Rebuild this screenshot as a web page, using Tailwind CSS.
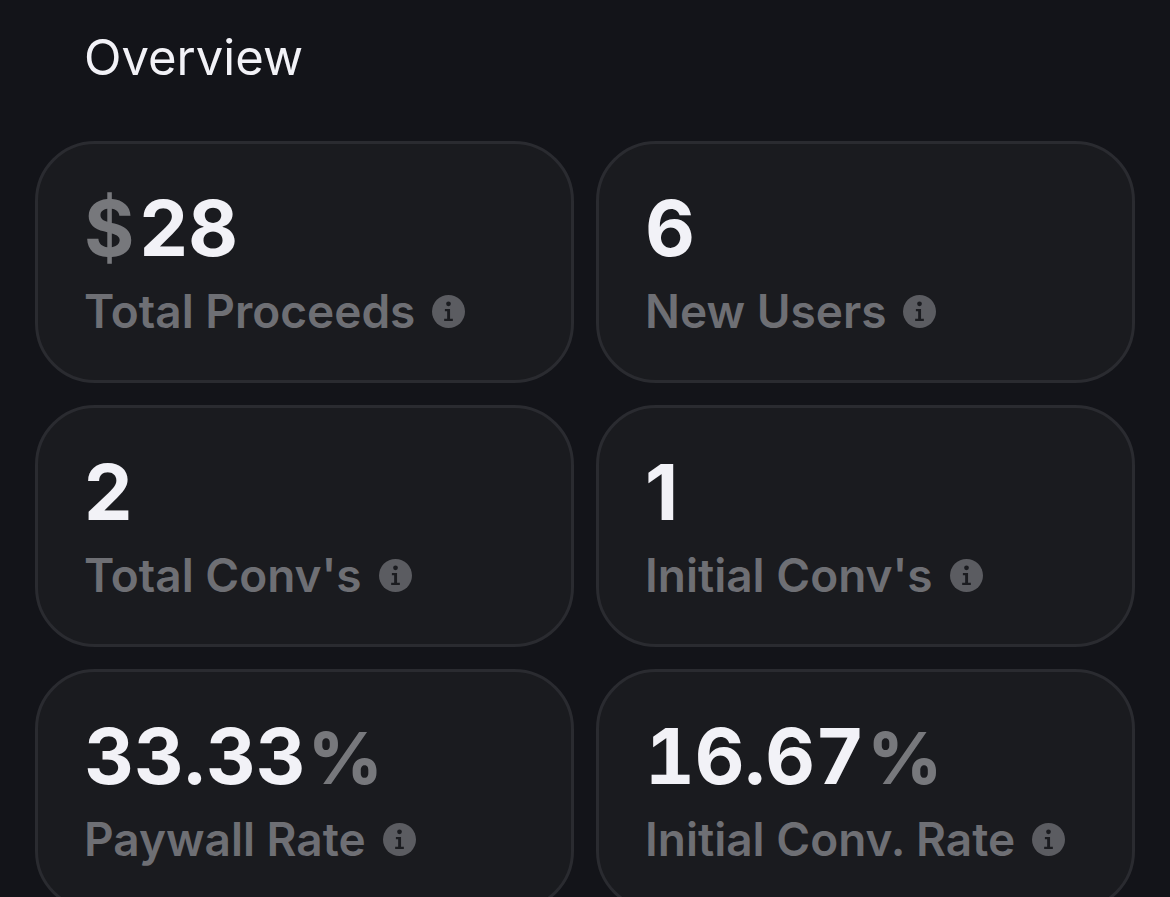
<!DOCTYPE html>
<html lang="en">
<head>
    <meta charset="UTF-8">
    <title>Overview</title>
    <script src="https://cdn.jsdelivr.net/npm/@tailwindcss/browser@4"></script>
</head>
<body class="bg-[#131419] font-['Inter',sans-serif] antialiased overflow-hidden h-[897px]">
    <svg class="hidden">
        <symbol id="info" viewBox="0 0 32 32">
            <circle cx="16" cy="16" r="16" fill="#5b5c61"/>
            <circle cx="16" cy="8.5" r="2.3" fill="#1b1c20"/>
            <path d="M12.5 13.5h5v9.5h2.7v2.2h-8.4V23h2.9v-7.3h-2.2z" fill="#1b1c20"/>
        </symbol>
    </svg>

    <main class="px-[35px]">
        <h1 class="pl-[49px] pt-[30px] h-[141px] text-[49px] leading-[56px] text-[#f2f2f7]">Overview</h1>

        <div class="grid grid-cols-2 gap-x-[22px] gap-y-[22px]">
            <!-- Total Proceeds -->
            <div class="h-[242px] rounded-[60px] border-[3px] border-[#2a2b30] bg-[#1a1b1f] pl-[46px] pt-[40px]">
                <div class="flex items-baseline h-[98px] text-[77px] leading-[88px] font-bold text-[#f2f2f7]"><span class="text-[#77787c] mr-[5px]">$</span>28</div>
                <div class="flex items-center gap-[17px] h-[58px] text-[46px] leading-[58px] font-semibold text-[#6e6f74]">Total Proceeds <svg class="w-[33px] h-[33px]"><use href="#info"/></svg></div>
            </div>
            <!-- New Users -->
            <div class="h-[242px] rounded-[60px] border-[3px] border-[#2a2b30] bg-[#1a1b1f] pl-[46px] pt-[40px]">
                <div class="h-[98px] text-[77px] leading-[88px] font-bold text-[#f2f2f7]">6</div>
                <div class="flex items-center gap-[17px] h-[58px] text-[46px] leading-[58px] font-semibold text-[#6e6f74]">New Users <svg class="w-[33px] h-[33px]"><use href="#info"/></svg></div>
            </div>
            <!-- Total Conv's -->
            <div class="h-[242px] rounded-[60px] border-[3px] border-[#2a2b30] bg-[#1a1b1f] pl-[46px] pt-[40px]">
                <div class="h-[98px] text-[77px] leading-[88px] font-bold text-[#f2f2f7]">2</div>
                <div class="flex items-center gap-[17px] h-[58px] text-[46px] leading-[58px] font-semibold text-[#6e6f74]">Total Conv's <svg class="w-[33px] h-[33px]"><use href="#info"/></svg></div>
            </div>
            <!-- Initial Conv's -->
            <div class="h-[242px] rounded-[60px] border-[3px] border-[#2a2b30] bg-[#1a1b1f] pl-[46px] pt-[40px]">
                <div class="h-[98px] text-[77px] leading-[88px] font-bold text-[#f2f2f7]">1</div>
                <div class="flex items-center gap-[17px] h-[58px] text-[46px] leading-[58px] font-semibold text-[#6e6f74]">Initial Conv's <svg class="w-[33px] h-[33px]"><use href="#info"/></svg></div>
            </div>
            <!-- Paywall Rate -->
            <div class="h-[242px] rounded-[60px] border-[3px] border-[#2a2b30] bg-[#1a1b1f] pl-[46px] pt-[40px]">
                <div class="flex items-baseline h-[98px] text-[77px] leading-[88px] font-bold text-[#f2f2f7]">33.33<span class="text-[#77787c] text-[72px] font-extrabold ml-[3px]">%</span></div>
                <div class="flex items-center gap-[17px] h-[58px] text-[46px] leading-[58px] font-semibold text-[#6e6f74]">Paywall Rate <svg class="w-[33px] h-[33px]"><use href="#info"/></svg></div>
            </div>
            <!-- Initial Conv. Rate -->
            <div class="h-[242px] rounded-[60px] border-[3px] border-[#2a2b30] bg-[#1a1b1f] pl-[46px] pt-[40px]">
                <div class="flex items-baseline h-[98px] text-[77px] leading-[88px] font-bold text-[#f2f2f7] tabular-nums">16.67<span class="text-[#77787c] text-[72px] font-extrabold ml-[3px]">%</span></div>
                <div class="flex items-center gap-[17px] h-[58px] text-[46px] leading-[58px] font-semibold text-[#6e6f74]">Initial Conv. Rate <svg class="w-[33px] h-[33px]"><use href="#info"/></svg></div>
            </div>
        </div>
    </main>
</body>
</html>
